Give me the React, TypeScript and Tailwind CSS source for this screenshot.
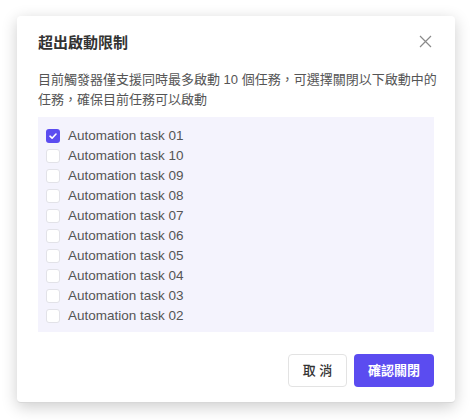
const tasks = [
  "Automation task 01",
  "Automation task 10",
  "Automation task 09",
  "Automation task 08",
  "Automation task 07",
  "Automation task 06",
  "Automation task 05",
  "Automation task 04",
  "Automation task 03",
  "Automation task 02",
];

const font = {
  fontFamily: '"Liberation Sans", "Noto Sans CJK TC", sans-serif',
};

const TaskRow = ({ name, checked }: { name: string; checked: boolean }) => {
  return (
    <label className="flex items-center h-5 gap-2">
      {checked ? (
        <span className="w-[14px] h-[14px] rounded-[3px] bg-[#5b4cf0] flex items-center justify-center">
          <svg width="10" height="10" viewBox="0 0 10 10" fill="none">
            <path d="M2 5.2 L4.1 7.2 L8 3" stroke="white" strokeWidth="1.6" strokeLinecap="round" strokeLinejoin="round" />
          </svg>
        </span>
      ) : (
        <span className="w-[14px] h-[14px] rounded-[3px] bg-white border border-[#e2e2e8]" />
      )}
      <span className="text-[13.5px] text-[#555] leading-5">{name}</span>
    </label>
  );
};

export default function App() {
  return (
    <div className="w-[472px] h-[420px] bg-white pt-4 pl-[17px]" style={font}>
      <div className="w-[438px] h-[387px] bg-white rounded-[4px] shadow-[0_4px_16px_rgba(0,0,0,0.2)] border-b border-[#d8d8d8] px-[21px] pt-[15px] flex flex-col">
        <div className="flex items-center justify-between h-6">
          <h2 className="text-[15px] font-bold text-[#333] leading-6">超出啟動限制</h2>
          <svg width="13" height="13" viewBox="0 0 13 13" className="mr-[2px] -mt-1">
            <path d="M1 1 L12 12 M12 1 L1 12" stroke="#8a8a8a" strokeWidth="1.2" />
          </svg>
        </div>
        <p className="mt-[15px] -mr-2 text-[13px] leading-5 text-[#555]">
          目前觸發器僅支援同時最多啟動 10 個任務，可選擇關閉以下啟動中的任務，確保目前任務可以啟動
        </p>
        <div className="mt-[7px] bg-[#f4f3fd] pl-2 pt-[9px] pb-[6px] flex flex-col">
          {tasks.map((t, i) => (
            <TaskRow key={t} name={t} checked={i === 0} />
          ))}
        </div>
        <div className="mt-[22px] flex justify-end gap-[7px]">
          <button className="w-[59px] h-[33px] rounded-[4px] border border-[#e3e3e3] bg-white text-[13px] text-[#333] font-medium">
            取 消
          </button>
          <button className="w-[80px] h-[33px] rounded-[4px] bg-[#5b4cf0] text-[13px] text-white font-bold">
            確認關閉
          </button>
        </div>
      </div>
    </div>
  );
}
